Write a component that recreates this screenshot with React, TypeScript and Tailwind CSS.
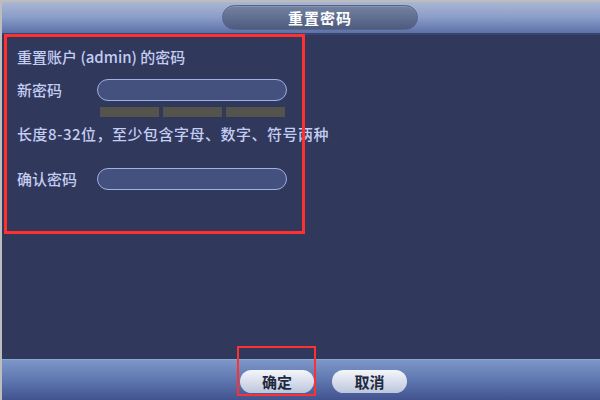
import React from "react";

const font = { fontFamily: '"Noto Sans CJK SC", "Noto Sans", sans-serif' };

export default function App() {
  return (
    <div
      className="relative w-[600px] h-[400px] overflow-hidden bg-[#bdbdbd] pt-[2px] pl-[2px] flex flex-col"
      style={font}
    >
      {/* header */}
      <div className="h-[31px] flex items-center pl-[220px] bg-gradient-to-b from-[#aab5d2] via-[#8a9dc9] to-[#5d71a8]">
        <div className="w-[196px] h-[25px] rounded-full bg-gradient-to-b from-[#7482a2] to-[#4d5b7e] border border-[#56648a] shadow-[inset_0_1px_0_rgba(255,255,255,0.15)] flex items-center justify-center">
          <span className="text-[15px] leading-none font-bold text-white tracking-[1px]">重置密码</span>
        </div>
      </div>
      <div className="h-[2px] bg-[#3a4470]" />

      {/* body */}
      <div className="flex-1 bg-[#30385c] pl-[15px] pt-[12px] text-[#c4cdf2] text-[15px] font-medium">
        <div className="leading-[20px] h-[20px]">重置账户 (admin) 的密码</div>
        <div className="flex items-center mt-[12px]">
          <div className="w-[80px] leading-[20px]">新密码</div>
          <div className="w-[190px] h-[22px] rounded-full bg-[#44507e] border-[1.5px] border-[#9fb0e2]" />
        </div>
        <div className="flex gap-[4px] ml-[83px] mt-[6px]">
          <div className="w-[59px] h-[10px] bg-[#55544c]" />
          <div className="w-[59px] h-[10px] bg-[#55544c]" />
          <div className="w-[59px] h-[10px] bg-[#55544c]" />
        </div>
        <div className="leading-[20px] mt-[7px] whitespace-nowrap tracking-[0.5px]">长度8-32位，至少包含字母、数字、符号两种</div>
        <div className="flex items-center mt-[24px]">
          <div className="w-[80px] leading-[20px]">确认密码</div>
          <div className="w-[190px] h-[22px] rounded-full bg-[#44507e] border-[1.5px] border-[#9fb0e2]" />
        </div>
      </div>

      {/* footer */}
      <div className="h-[1px] bg-[#8ea6d6]" />
      <div className="h-[40px] bg-gradient-to-b from-[#7c97c8] via-[#5f77b0] to-[#42538f] flex items-center pl-[238px] gap-[18px] pt-[3px]">
        <div className="w-[74px] h-[23px] rounded-full bg-gradient-to-b from-[#f4f6fb] to-[#bcc6dc] flex items-center justify-center">
          <span className="text-[15px] leading-none font-bold text-[#1f2a40]">确定</span>
        </div>
        <div className="w-[75px] h-[23px] rounded-full bg-gradient-to-b from-[#f4f6fb] to-[#bcc6dc] flex items-center justify-center">
          <span className="text-[15px] leading-none font-bold text-[#1f2a40]">取消</span>
        </div>
      </div>

      {/* red annotations */}
      <div className="absolute left-[4px] top-[34px] w-[301px] h-[200px] border-[3px] border-[#ff3030] pointer-events-none" />
      <div className="absolute left-[237px] top-[346px] w-[79px] h-[50px] border-[2px] border-[#ff3030] pointer-events-none" />
    </div>
  );
}
